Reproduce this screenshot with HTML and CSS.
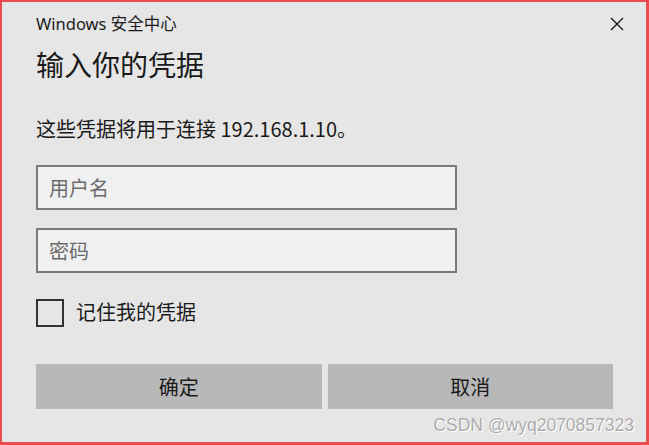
FILE: index.html
```html
<!DOCTYPE html>
<html lang="zh-CN">
<head>
  <meta charset="UTF-8">
  <meta name="viewport" content="width=device-width, initial-scale=1.0">
  <title>Windows 安全中心</title>
  <link rel="stylesheet" href="styles.css">
</head>
<body>
  <div class="dialog">
    <div class="titlebar">
      <span class="app-name">Windows 安全中心</span>
      <button class="close" aria-label="关闭">
        <svg width="14" height="14" viewBox="0 0 14 14">
          <path d="M1 1 L13 13 M13 1 L1 13" stroke="#111" stroke-width="1.3" fill="none"/>
        </svg>
      </button>
    </div>

    <h1 class="heading">输入你的凭据</h1>
    <p class="desc">这些凭据将用于连接 192.168.1.10。</p>

    <input class="field field-user" type="text" placeholder="用户名">
    <input class="field field-pass" type="password" placeholder="密码">

    <label class="remember">
      <span class="checkbox"></span>
      <span>记住我的凭据</span>
    </label>

    <div class="actions">
      <button class="btn">确定</button>
      <button class="btn">取消</button>
    </div>
  </div>

  <div class="watermark">CSDN @wyq2070857323</div>
</body>
</html>
```

FILE: styles.css
```css
:root {
  --bg: #e6e6e6;
  --frame: #e94d4f;
  --field-bg: #f0f0f0;
  --field-border: #7a7a7a;
  --btn-bg: #b8b8b8;
  --text: #1a1a1a;
}

html, body {
  margin: 0;
  padding: 0;
}

body {
  width: 649px;
  height: 445px;
  box-sizing: border-box;
  border: 2px solid var(--frame);
  border-right-width: 3px;
  border-bottom-width: 3px;
  background: var(--bg);
  color: var(--text);
  font-family: "Noto Sans", "Noto Sans CJK SC", sans-serif;
  position: relative;
  overflow: hidden;
}

.dialog {
  padding: 12px 22px 0 34px;
  display: flex;
  flex-direction: column;
}

.titlebar {
  display: flex;
  justify-content: space-between;
  align-items: center;
  height: 20px;
}

.app-name {
  font-size: 16.5px;
  line-height: 20px;
}

.close {
  border: none;
  background: none;
  padding: 0;
  width: 14px;
  height: 14px;
  display: flex;
}

.heading {
  margin: 13px 0 0;
  font-size: 28px;
  font-weight: normal;
  line-height: 36px;
}

/* the address digits are narrower in the original, closer to the CJK face's latin */
.desc {
  margin: 32px 0 0;
  font-family: "Noto Sans CJK SC", sans-serif;
  font-size: 20px;
  line-height: 28px;
}

.field {
  box-sizing: border-box;
  width: 421px;
  height: 45px;
  margin: 0;
  padding: 2px 11px 0;
  border: 2px solid var(--field-border);
  background: var(--field-bg);
  font-family: inherit;
  font-size: 20px;
  outline: none;
}

.field::placeholder {
  color: #6b6b6b;
}

.field-user {
  margin-top: 22px;
}

.field-pass {
  margin-top: 18px;
}

.remember {
  margin-top: 26px;
  display: flex;
  align-items: center;
  gap: 12px;
  font-size: 20px;
  line-height: 28px;
}

.checkbox {
  box-sizing: border-box;
  width: 28px;
  height: 28px;
  border: 2px solid #333;
}

.actions {
  margin-top: 37px;
  width: 577px;
  display: grid;
  grid-template-columns: 1fr 1fr;
  gap: 6px;
}

.btn {
  height: 45px;
  border: none;
  background: var(--btn-bg);
  color: var(--text);
  font-family: inherit;
  font-size: 20px;
  padding: 0;
}

.watermark {
  position: absolute;
  right: 12px;
  bottom: 6px;
  font-family: "Liberation Sans", Arial, sans-serif;
  font-size: 17.5px;
  color: #ababab;
  text-shadow: 0 0 1px #fff, 1px 1px 0 #fff;
}
```
